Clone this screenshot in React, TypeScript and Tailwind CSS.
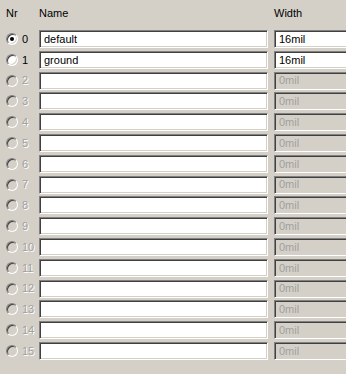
const rows = Array.from({ length: 16 }, (_, i) => ({
  nr: i,
  name: i === 0 ? "default" : i === 1 ? "ground" : "",
  width: i < 2 ? "16mil" : "0mil",
  enabled: i < 2,
}));

const sunken =
  "border border-t-[#808080] border-l-[#808080] border-b-white border-r-white shadow-[inset_1px_1px_0_#404040,inset_-1px_-1px_0_#d4d0c8]";

function Radio({ checked, enabled }: { checked: boolean; enabled: boolean }) {
  return (
    <span
      className={`flex h-[12px] w-[12px] shrink-0 items-center justify-center rounded-full ${sunken} ${
        enabled ? "bg-white" : "bg-[#d4d0c8]"
      }`}
    >
      {checked && <span className="h-[4px] w-[4px] rounded-full bg-black" />}
    </span>
  );
}

export default function App() {
  return (
    <div
      className="h-[374px] w-[346px] overflow-hidden bg-[#d4d0c8] text-[11px] text-black"
      style={{ fontFamily: '"Liberation Sans", Arial, sans-serif' }}
    >
      {/* header */}
      <div className="flex h-[27px] items-center">
        <span className="w-[39px] shrink-0 pl-[6px]">Nr</span>
        <span className="w-[235px] shrink-0">Name</span>
        <span>Width</span>
      </div>

      <div className="flex flex-col pt-[3px]">
        {rows.map((r) => (
          <div key={r.nr} className="flex h-[20.8px] items-start">
            <div className="flex h-[18px] w-[39px] shrink-0 items-center gap-[4px] pl-[6px]">
              <Radio checked={r.nr === 0} enabled={r.enabled} />
              <span
                className={r.enabled ? "text-black" : "text-[#a0a0a0] [text-shadow:1px_1px_0_#fff]"}
              >
                {r.nr}
              </span>
            </div>
            <div className={`flex h-[18px] w-[229px] shrink-0 items-center bg-white pl-[4px] ${sunken}`}>
              {r.name}
            </div>
            <div
              className={`ml-[6px] flex h-[18px] w-[80px] shrink-0 items-center pl-[4px] ${sunken} ${
                r.enabled ? "bg-white text-black" : "bg-[#d4d0c8] text-[#a0a0a0]"
              }`}
            >
              {r.width}
            </div>
          </div>
        ))}
      </div>
    </div>
  );
}
